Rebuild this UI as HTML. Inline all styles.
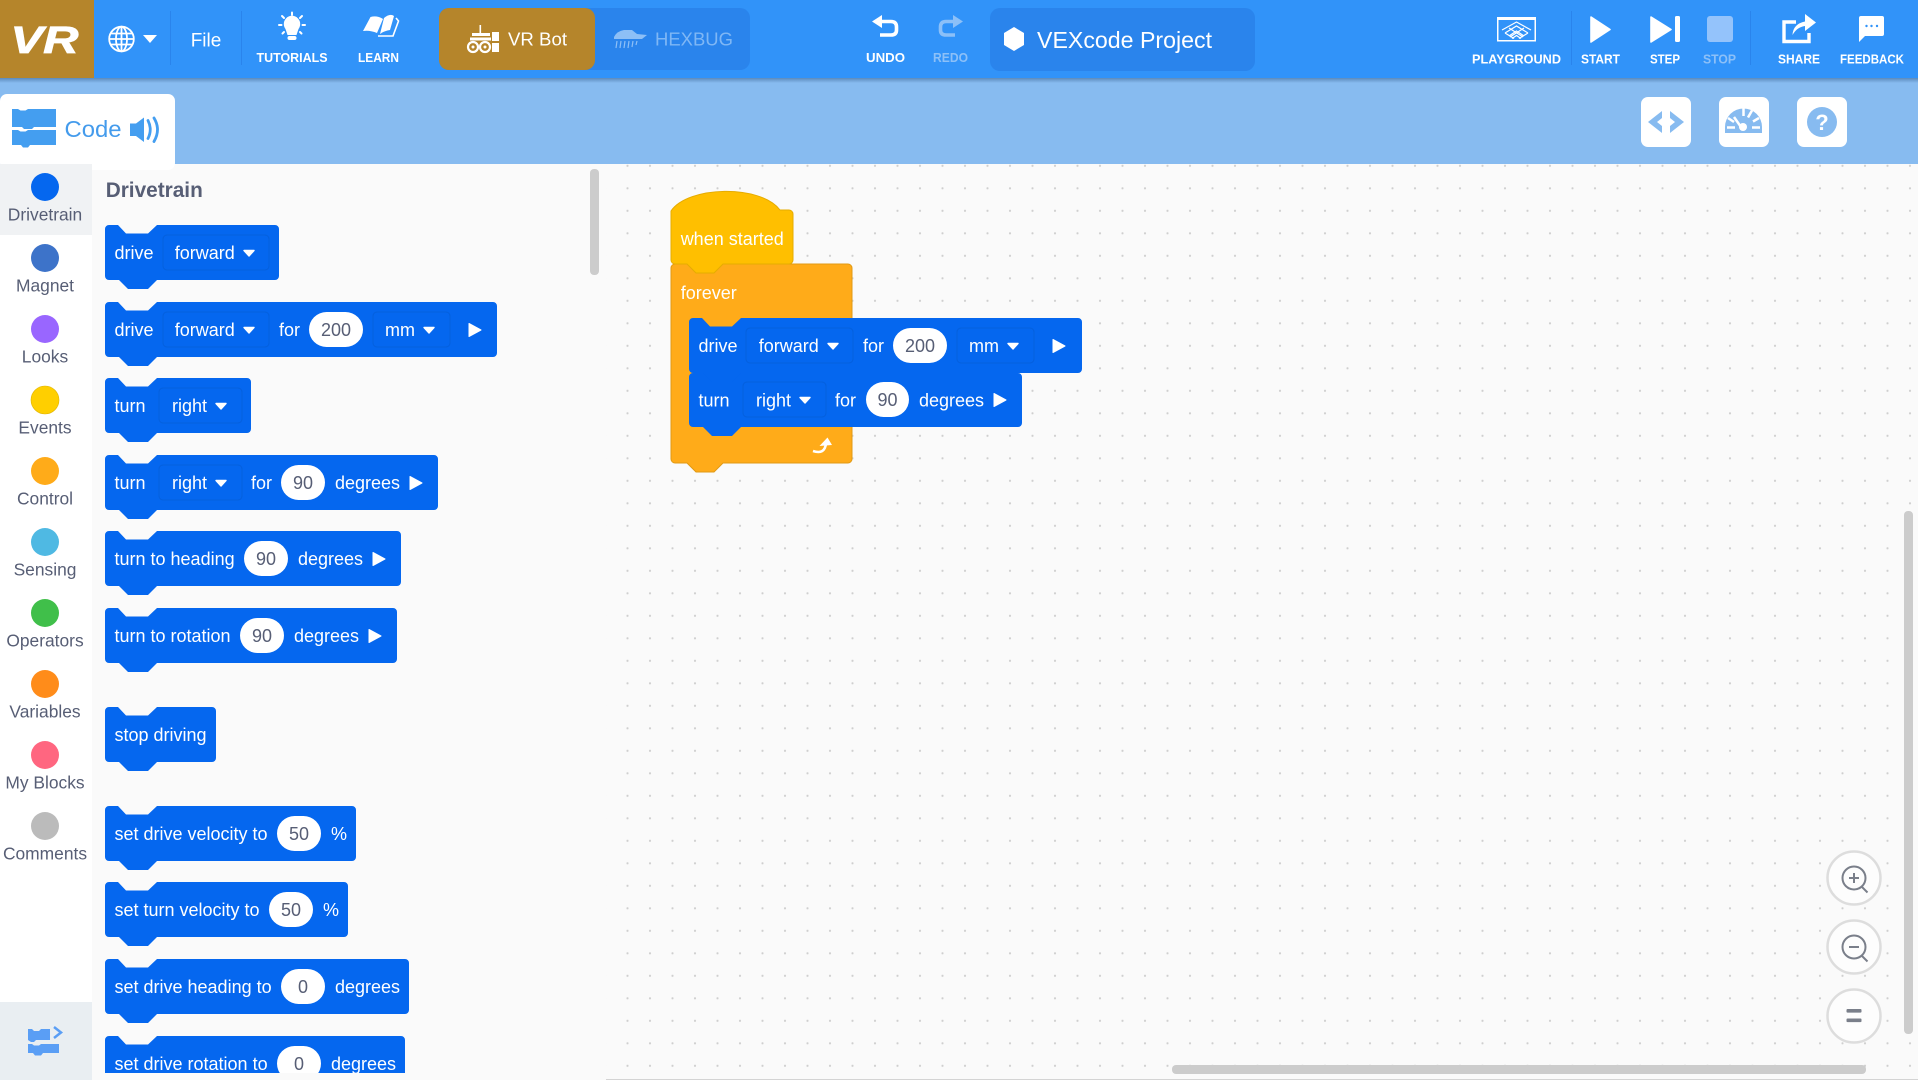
<!DOCTYPE html>
<html><head><meta charset="utf-8"><title>VEXcode VR</title>
<style>
html,body{margin:0;padding:0;background:#fafafa;overflow:hidden}
svg{display:block}
text{font-family:"Liberation Sans",Arial,sans-serif}
.b text{font-size:18px;fill:#fff}
.b .g{fill:#575e75;text-anchor:middle}
.b .bb{fill:#0567ef}
.dd{fill:#0567ef;stroke:#0560dd;stroke-width:1}
.pill{fill:#fff}
.l{font-weight:bold;font-size:13px;fill:#fff;text-anchor:middle}
.c{font-size:17.4px;fill:#575e75;text-anchor:middle}
</style></head>
<body>
<svg xmlns="http://www.w3.org/2000/svg" width="1918" height="1080" viewBox="0 0 1918 1080">
<defs>
<pattern id="dots" patternUnits="userSpaceOnUse" x="648.5" y="186.8" width="22.5" height="22.5"><circle cx="1.5" cy="1.5" r="1.1" fill="#cfcfcf"/></pattern>
<clipPath id="fc"><rect x="92" y="164" width="514" height="909"/></clipPath>
<path id="ar" d="M0 0h10l-5 5.5z" fill="#fff" stroke="#fff" stroke-width="1.4" stroke-linejoin="round"/>
<path id="pl" d="M0 0l12 6.5-12 6.5z" fill="#fff" stroke="#fff" stroke-width="1" stroke-linejoin="round"/>
<linearGradient id="sh" x1="0" y1="0" x2="0" y2="1"><stop offset="0" stop-color="#44709f" stop-opacity=".65"/><stop offset="1" stop-color="#44709f" stop-opacity="0"/></linearGradient>
</defs>

<!-- backgrounds -->
<rect width="1918" height="1080" fill="#fafafa"/>
<rect x="606" y="164" width="1312" height="916" fill="url(#dots)"/>
<rect x="606" y="1079" width="1312" height="1" fill="#d4d4d4"/>
<rect y="78" width="1918" height="86" fill="#87bbf0"/>
<rect y="78" width="1918" height="5" fill="url(#sh)"/>
<rect width="1918" height="78" fill="#3193f9"/>

<!-- header left -->
<rect width="94" height="78" fill="#b5852b"/>
<text x="10.500" y="53" font-size="38" font-weight="bold" font-style="italic" fill="#fff" stroke="#fff" stroke-width=".8" textLength="68" lengthAdjust="spacingAndGlyphs">VR</text>
<g fill="none" stroke="#fff" stroke-width="1.8"><circle cx="121.500" cy="39" r="12.300"/><ellipse cx="121.500" cy="39" rx="5.500" ry="12.300"/><path d="M121.500 27v24M110 33.500h23M109.500 39h24M110 44.500h23"/></g>
<path d="M143 35h14l-7 8z" fill="#fff"/>
<rect x="170" y="11" width="1" height="54" fill="#2a84ec"/>
<text x="206" y="46.500" font-size="19" fill="#fff" text-anchor="middle">File</text>
<rect x="241" y="11" width="1" height="54" fill="#2a84ec"/>
<!-- tutorials -->
<g fill="#fff"><circle cx="292" cy="24" r="8.200"/><path d="M285.500 29h13l-2 6h-9z"/><rect x="287.500" y="36" width="9" height="4" rx="2"/></g>
<g stroke="#fff" stroke-width="2" stroke-linecap="round"><path d="M292 12.500v2.500M282 16l2 2M302 16l-2 2M279 25h2.500M305 25h-2.500M282.500 33.500l1.500-1.500M301.500 33.500l-1.500-1.500"/></g>
<text class="l" x="292" y="62" textLength="71" lengthAdjust="spacingAndGlyphs">TUTORIALS</text>
<!-- learn -->
<path d="M363 31L370.500 17Q377 15 383 19L377 33Q370 30 363 31z" fill="#fff"/>
<path d="M380 34L384 18Q390 13 394 16L390 30Q384 31 380 34z" fill="#fff"/>
<path d="M396 18L398.500 21L393 36H378" fill="none" stroke="#fff" stroke-width="1.600"/>
<text class="l" x="378.500" y="62" textLength="41" lengthAdjust="spacingAndGlyphs">LEARN</text>
<!-- VR Bot -->
<rect x="439" y="8" width="311" height="62" rx="10" fill="#2a84ec"/>
<rect x="439" y="8" width="156" height="62" rx="10" fill="#b5852b"/>
<g fill="#fff"><rect x="479.500" y="25" width="1.600" height="8"/><rect x="472" y="33" width="18" height="3"/><rect x="470" y="37.500" width="21" height="3"/><rect x="492" y="32" width="7" height="9"/><rect x="492" y="43" width="7" height="9"/></g>
<g fill="none" stroke="#fff" stroke-width="2.200"><circle cx="473" cy="47" r="5"/><circle cx="485" cy="47" r="5"/></g>
<circle cx="473" cy="47" r="1.500" fill="#fff"/><circle cx="485" cy="47" r="1.500" fill="#fff"/>
<text x="508" y="45.500" font-size="18.600" fill="#fff" textLength="59" lengthAdjust="spacingAndGlyphs">VR Bot</text>
<!-- Hexbug -->
<path d="M614 37q3-6 10-7h8l5 4 10 1-5 4-28 0z" fill="#8dbff6"/>
<path d="M617 41l-1 7M621 41l-1 7M625 41l-1 7M629 41l-1 7M633 41l-1 6M637 41l-1 4" stroke="#8dbff6" stroke-width="1.200" fill="none"/>
<text x="655" y="45.500" font-size="18.500" fill="#7fb7f5" textLength="78" lengthAdjust="spacingAndGlyphs">HEXBUG</text>
<!-- undo/redo -->
<path d="M872 21.500l10-6.500v13z" fill="#fff"/>
<path d="M880 21.500h11q5.500 0 5.500 5.500v3q0 5-5.500 5h-11" fill="none" stroke="#fff" stroke-width="3.600"/>
<text class="l" x="885.500" y="62" textLength="39" lengthAdjust="spacingAndGlyphs">UNDO</text>
<path d="M963 21.500l-10-6.500v13z" fill="#8cc0f8"/>
<path d="M955 21.500h-9q-5.500 0-5.500 5.500v3q0 5 5.500 5h9" fill="none" stroke="#8cc0f8" stroke-width="3.600"/>
<text class="l" x="950.500" y="62" style="fill:#8cc0f8" textLength="35" lengthAdjust="spacingAndGlyphs">REDO</text>
<!-- project -->
<rect x="990" y="8" width="265" height="63" rx="10" fill="#2a84ec"/>
<path d="M1014 27l10 6v12l-10 6-10-6V33z" fill="#fff"/>
<text x="1037" y="48" font-size="23" fill="#fff" textLength="175" lengthAdjust="spacingAndGlyphs">VEXcode Project</text>
<!-- playground -->
<rect x="1497.750" y="17.750" width="37.500" height="23" fill="none" stroke="#fff" stroke-width="1.500"/>
<rect x="1497" y="17" width="39" height="3" fill="#fff"/>
<g fill="none" stroke="#fff" stroke-width="1.200"><path d="M1502 30l14.500-8 14.500 8M1505 33l11.500-7 11.500 7M1509 36l7.500-5 7.500 5M1512 38.500l4.500-3 4.500 3M1505 33l9 5.500M1528 33l-9 5.500M1509 28l14 9M1524 28l-14 9"/></g>
<text class="l" x="1516.500" y="63.700" textLength="89" lengthAdjust="spacingAndGlyphs">PLAYGROUND</text>
<rect x="1571" y="11" width="1" height="54" fill="#2a84ec"/>
<path d="M1591 17l19 12.500-19 12.500z" fill="#fff" stroke="#fff" stroke-width="1.600" stroke-linejoin="round"/>
<text class="l" x="1600.500" y="63.700" textLength="39" lengthAdjust="spacingAndGlyphs">START</text>
<path d="M1651 17l20 12.500-20 12.500z" fill="#fff" stroke="#fff" stroke-width="1.600" stroke-linejoin="round"/>
<rect x="1675" y="16" width="5" height="26" rx="1.500" fill="#fff"/>
<text class="l" x="1665" y="63.700" textLength="30" lengthAdjust="spacingAndGlyphs">STEP</text>
<rect x="1707" y="16" width="26" height="26" rx="3" fill="#94c3fb"/>
<text class="l" x="1719.500" y="63.700" style="fill:#8cc0f8" textLength="33" lengthAdjust="spacingAndGlyphs">STOP</text>
<rect x="1750" y="11" width="1" height="54" fill="#2a84ec"/>
<path d="M1796 22h-12v19.500h25V33" fill="none" stroke="#fff" stroke-width="3.400"/>
<path d="M1792.500 35q.5-11 12.500-13.500V14l11 8.500-11 8.500v-5q-8 1-12.500 9z" fill="#fff"/>
<text class="l" x="1799" y="63.700" textLength="42" lengthAdjust="spacingAndGlyphs">SHARE</text>
<path d="M1861 16h21q2 0 2 2v16q0 2-2 2h-17l-6 6V18q0-2 2-2z" fill="#fff"/>
<g fill="#3193f9"><circle cx="1866.500" cy="26" r="1.200"/><circle cx="1871.500" cy="26" r="1.200"/><circle cx="1877" cy="26" r="1.200"/></g>
<text class="l" x="1872" y="63.700" textLength="64" lengthAdjust="spacingAndGlyphs">FEEDBACK</text>

<!-- sub toolbar -->
<rect x="0" y="94" width="175" height="76" rx="7" fill="#fff"/>
<path d="M12 109h6l2.500 1.500h5L28 109h28v18H34l-2 2h-8l-2-2H12zM12 130h6l2.500 1.500h5L28 130h28v15H30l-2 2.500h-5L21 145H12z" fill="#449ef0"/>
<text x="64.500" y="137" font-size="23.400" fill="#449bec" textLength="57" lengthAdjust="spacingAndGlyphs">Code</text>
<path d="M130 123.500h6l8-6v24.500l-8-6h-6z" fill="#449ef0"/>
<path d="M148 120.500q4.500 9 0 18M154 118q7 11.500 0 23.500" fill="none" stroke="#449ef0" stroke-width="2.800" stroke-linecap="round"/>

<rect x="1641" y="97" width="50" height="50" rx="7" fill="#fff"/>
<path d="M1662 111l-14 11 14 11v-7l-5-4 5-4zM1670 111l14 11-14 11v-7l5-4-5-4z" fill="#87bbf0"/>
<rect x="1719" y="97" width="50" height="50" rx="7" fill="#fff"/>
<path d="M1725 133v-6a18.500 18.500 0 0 1 37 0v6z" fill="#87bbf0"/>
<g stroke="#fff" stroke-width="2.500" fill="none"><path d="M1727 127.500h8M1752 127.500h8M1741 127l-7-10M1743.500 108v8M1752 110.500l-4 7M1759 118l-6 3.500M1728 118l6 4"/></g>
<circle cx="1743" cy="127" r="4" fill="#fff"/>
<rect x="1797" y="97" width="50" height="50" rx="7" fill="#fff"/>
<circle cx="1822" cy="122" r="15" fill="#87bbf0"/>
<text x="1822" y="130" font-size="22" font-weight="bold" fill="#fff" text-anchor="middle">?</text>

<!-- sidebar -->
<rect y="164" width="92" height="916" fill="#fff"/>
<rect y="164" width="92" height="71" fill="#f0f2f4"/>
<rect y="1002" width="92" height="78" fill="#e9eef2"/>
<circle cx="45" cy="187" r="14" fill="#0567ef"/><text class="c" x="45" y="220.500">Drivetrain</text>
<circle cx="45" cy="258" r="14" fill="#3d73c9"/><text class="c" x="45" y="291.500">Magnet</text>
<circle cx="45" cy="329" r="14" fill="#9966ff"/><text class="c" x="45" y="362.500">Looks</text>
<circle cx="45" cy="400" r="14" fill="#ffcf00" stroke="#e0b400" stroke-width=".6"/><text class="c" x="45" y="433.500">Events</text>
<circle cx="45" cy="471" r="14" fill="#ffab19"/><text class="c" x="45" y="504.500">Control</text>
<circle cx="45" cy="542" r="14" fill="#4fb9e3"/><text class="c" x="45" y="575.500">Sensing</text>
<circle cx="45" cy="613" r="14" fill="#40bf4a"/><text class="c" x="45" y="646.500">Operators</text>
<circle cx="45" cy="684" r="14" fill="#ff8c1a"/><text class="c" x="45" y="717.500">Variables</text>
<circle cx="45" cy="755" r="14" fill="#ff6680"/><text class="c" x="45" y="788.500">My Blocks</text>
<circle cx="45" cy="826" r="14" fill="#bbbbbb"/><text class="c" x="45" y="859.500">Comments</text>
<path d="M28 1029h4l2 2h5l2-2h9v11H36l-2 2h-3l-3-2zM28 1044h4l2 1.500h5l2-1.500h18v9H43l-2 2.500h-6l-2-2.500h-5z" fill="#5a9ef5"/>
<path d="M54 1027l7 5.500-7 5.500" fill="none" stroke="#5a9ef5" stroke-width="2.500"/>

<!-- flyout -->
<text x="105.700" y="197" font-size="20.800" font-weight="bold" fill="#575e75">Drivetrain</text>
<rect x="590" y="169" width="9" height="106" rx="4" fill="#cccccc"/>
<g clip-path="url(#fc)">
<g class="b" transform="translate(105,225)"><path class="bb" d="M4 0h9l8 8.500h22l9-8.500H170a4 4 0 0 1 4 4v47a4 4 0 0 1-4 4H52l-9 9H23l-9-9H4a4 4 0 0 1-4-4V4a4 4 0 0 1 4-4z"/>
<text x="9.500" y="34.200">drive</text><rect class="dd" x="58" y="10" width="106" height="35" rx="4"/><text x="69.700" y="34.200">forward</text><use href="#ar" x="139" y="25.500"/></g>

<g class="b" transform="translate(105,302)"><path class="bb" d="M4 0h9l8 8.500h22l9-8.500H388a4 4 0 0 1 4 4v47a4 4 0 0 1-4 4H52l-9 9H23l-9-9H4a4 4 0 0 1-4-4V4a4 4 0 0 1 4-4z"/>
<text x="9.500" y="34.200">drive</text><rect class="dd" x="58" y="10" width="106" height="35" rx="4"/><text x="69.700" y="34.200">forward</text><use href="#ar" x="139" y="25.500"/><text x="174" y="34.200">for</text><rect class="pill" x="204" y="10" width="54" height="35" rx="17.500"/><text class="g" x="231" y="34">200</text><rect class="dd" x="268" y="10" width="77" height="35" rx="4"/><text x="280" y="34.200">mm</text><use href="#ar" x="319" y="25.500"/><use href="#pl" x="364" y="21.500"/></g>

<g class="b" transform="translate(105,378)"><path class="bb" d="M4 0h9l8 8.500h22l9-8.500H142a4 4 0 0 1 4 4v47a4 4 0 0 1-4 4H52l-9 9H23l-9-9H4a4 4 0 0 1-4-4V4a4 4 0 0 1 4-4z"/>
<text x="9.500" y="34.200">turn</text><rect class="dd" x="54" y="10" width="83" height="35" rx="4"/><text x="67" y="34.200">right</text><use href="#ar" x="111" y="25.500"/></g>

<g class="b" transform="translate(105,455)"><path class="bb" d="M4 0h9l8 8.500h22l9-8.500H329a4 4 0 0 1 4 4v47a4 4 0 0 1-4 4H52l-9 9H23l-9-9H4a4 4 0 0 1-4-4V4a4 4 0 0 1 4-4z"/>
<text x="9.500" y="34.200">turn</text><rect class="dd" x="54" y="10" width="83" height="35" rx="4"/><text x="67" y="34.200">right</text><use href="#ar" x="111" y="25.500"/><text x="146" y="34.200">for</text><rect class="pill" x="176" y="10" width="44" height="35" rx="17.500"/><text class="g" x="198" y="34">90</text><text x="230" y="34.200">degrees</text><use href="#pl" x="305" y="21.500"/></g>

<g class="b" transform="translate(105,531)"><path class="bb" d="M4 0h9l8 8.500h22l9-8.500H292a4 4 0 0 1 4 4v47a4 4 0 0 1-4 4H52l-9 9H23l-9-9H4a4 4 0 0 1-4-4V4a4 4 0 0 1 4-4z"/>
<text x="9.500" y="34.200">turn to heading</text><rect class="pill" x="139" y="10" width="44" height="35" rx="17.500"/><text class="g" x="161" y="34">90</text><text x="193" y="34.200">degrees</text><use href="#pl" x="268" y="21.500"/></g>

<g class="b" transform="translate(105,608)"><path class="bb" d="M4 0h9l8 8.500h22l9-8.500H288a4 4 0 0 1 4 4v47a4 4 0 0 1-4 4H52l-9 9H23l-9-9H4a4 4 0 0 1-4-4V4a4 4 0 0 1 4-4z"/>
<text x="9.500" y="34.200">turn to rotation</text><rect class="pill" x="135" y="10" width="44" height="35" rx="17.500"/><text class="g" x="157" y="34">90</text><text x="189" y="34.200">degrees</text><use href="#pl" x="264" y="21.500"/></g>

<g class="b" transform="translate(105,707)"><path class="bb" d="M4 0h9l8 8.500h22l9-8.500H107a4 4 0 0 1 4 4v47a4 4 0 0 1-4 4H52l-9 9H23l-9-9H4a4 4 0 0 1-4-4V4a4 4 0 0 1 4-4z"/>
<text x="9.500" y="34.200">stop driving</text></g>

<g class="b" transform="translate(105,806)"><path class="bb" d="M4 0h9l8 8.500h22l9-8.500H247a4 4 0 0 1 4 4v47a4 4 0 0 1-4 4H52l-9 9H23l-9-9H4a4 4 0 0 1-4-4V4a4 4 0 0 1 4-4z"/>
<text x="9.500" y="34.200">set drive velocity to</text><rect class="pill" x="172" y="10" width="44" height="35" rx="17.500"/><text class="g" x="194" y="34">50</text><text x="226" y="34.200">%</text></g>

<g class="b" transform="translate(105,882)"><path class="bb" d="M4 0h9l8 8.500h22l9-8.500H239a4 4 0 0 1 4 4v47a4 4 0 0 1-4 4H52l-9 9H23l-9-9H4a4 4 0 0 1-4-4V4a4 4 0 0 1 4-4z"/>
<text x="9.500" y="34.200">set turn velocity to</text><rect class="pill" x="164" y="10" width="44" height="35" rx="17.500"/><text class="g" x="186" y="34">50</text><text x="218" y="34.200">%</text></g>

<g class="b" transform="translate(105,959)"><path class="bb" d="M4 0h9l8 8.500h22l9-8.500H300a4 4 0 0 1 4 4v47a4 4 0 0 1-4 4H52l-9 9H23l-9-9H4a4 4 0 0 1-4-4V4a4 4 0 0 1 4-4z"/>
<text x="9.500" y="34.200">set drive heading to</text><rect class="pill" x="176" y="10" width="44" height="35" rx="17.500"/><text class="g" x="198" y="34">0</text><text x="230" y="34.200">degrees</text></g>

<g class="b" transform="translate(105,1036)"><path class="bb" d="M4 0h9l8 8.500h22l9-8.500H296a4 4 0 0 1 4 4v47a4 4 0 0 1-4 4H52l-9 9H23l-9-9H4a4 4 0 0 1-4-4V4a4 4 0 0 1 4-4z"/>
<text x="9.500" y="34.200">set drive rotation to</text><rect class="pill" x="172" y="10" width="44" height="35" rx="17.500"/><text class="g" x="194" y="34">0</text><text x="226" y="34.200">degrees</text></g>
</g>

<!-- workspace stack -->
<path d="M675 264H848a4 4 0 0 1 4 4V459a4 4 0 0 1-4 4H723l-9 9H696l-9-9H675a4 4 0 0 1-4-4V268a4 4 0 0 1 4-4z" fill="#ffab19" stroke="#e09a15" stroke-width="1"/>
<path d="M671 211C688 186 760 184 780 210H789a4 4 0 0 1 4 4V260a4 4 0 0 1-4 4H723l-9 9H696l-9-9H675a4 4 0 0 1-4-4z" fill="#ffbf00" stroke="#e6ac00" stroke-width="1"/>
<text x="680.700" y="245" font-size="18" fill="#fff">when started</text>
<text x="680.700" y="299" font-size="18" fill="#fff">forever</text>
<path d="M813 451Q825 455 826 443" fill="none" stroke="#fff" stroke-width="2.600"/>
<path d="M819.500 446l8-8.500 4.500 7.500z" fill="#fff"/>

<g class="b" transform="translate(689,373)"><path class="bb" d="M4 0H329a4 4 0 0 1 4 4v46a4 4 0 0 1-4 4H52l-9 9H23l-9-9H4a4 4 0 0 1-4-4V4a4 4 0 0 1 4-4z"/>
<text x="9.500" y="33.500">turn</text><rect class="dd" x="54" y="9" width="83" height="35" rx="4"/><text x="67" y="33.500">right</text><use href="#ar" x="111" y="24.500"/><text x="146" y="33.500">for</text><rect class="pill" x="177" y="9" width="43" height="35" rx="17.500"/><text class="g" x="198.500" y="33">90</text><text x="230" y="33.500">degrees</text><use href="#pl" x="305" y="20.500"/></g>
<g class="b" transform="translate(689,318)"><path class="bb" d="M4 0h9l8 8.500h22l9-8.500H389a4 4 0 0 1 4 4v47a4 4 0 0 1-4 4H52l-9 9H23l-9-9H4a4 4 0 0 1-4-4V4a4 4 0 0 1 4-4z"/>
<text x="9.500" y="34.200">drive</text><rect class="dd" x="57" y="10" width="107" height="35" rx="4"/><text x="69.700" y="34.200">forward</text><use href="#ar" x="139" y="25.500"/><text x="174" y="34.200">for</text><rect class="pill" x="204" y="10" width="54" height="35" rx="17.500"/><text class="g" x="231" y="34">200</text><rect class="dd" x="268" y="10" width="77" height="35" rx="4"/><text x="280" y="34.200">mm</text><use href="#ar" x="319" y="25.500"/><use href="#pl" x="364" y="21.500"/></g>

<!-- scrollbars -->
<rect x="1904" y="511" width="9" height="523" rx="4" fill="#cccccc"/>
<rect x="1172" y="1065" width="694" height="9" rx="4" fill="#cccccc"/>

<!-- zoom controls -->
<g fill="#fdfdfd" stroke="#dddddd" stroke-width="2.500"><circle cx="1854" cy="878" r="26.500"/><circle cx="1854" cy="947" r="26.500"/><circle cx="1854" cy="1016" r="26.500"/></g>
<g fill="none" stroke="#7a7f8a" stroke-width="2"><circle cx="1854" cy="878" r="11.500"/><path d="M1862 887l5.500 5.500M1849 878h10M1854 873v10"/><circle cx="1854" cy="947" r="11.500"/><path d="M1862 956l5.500 5.500M1849 947h10"/></g>
<g fill="#7a7f8a"><rect x="1846.500" y="1009" width="15" height="3.600" rx="1"/><rect x="1846.500" y="1018.500" width="15" height="3.600" rx="1"/></g>
</svg>
</body></html>
